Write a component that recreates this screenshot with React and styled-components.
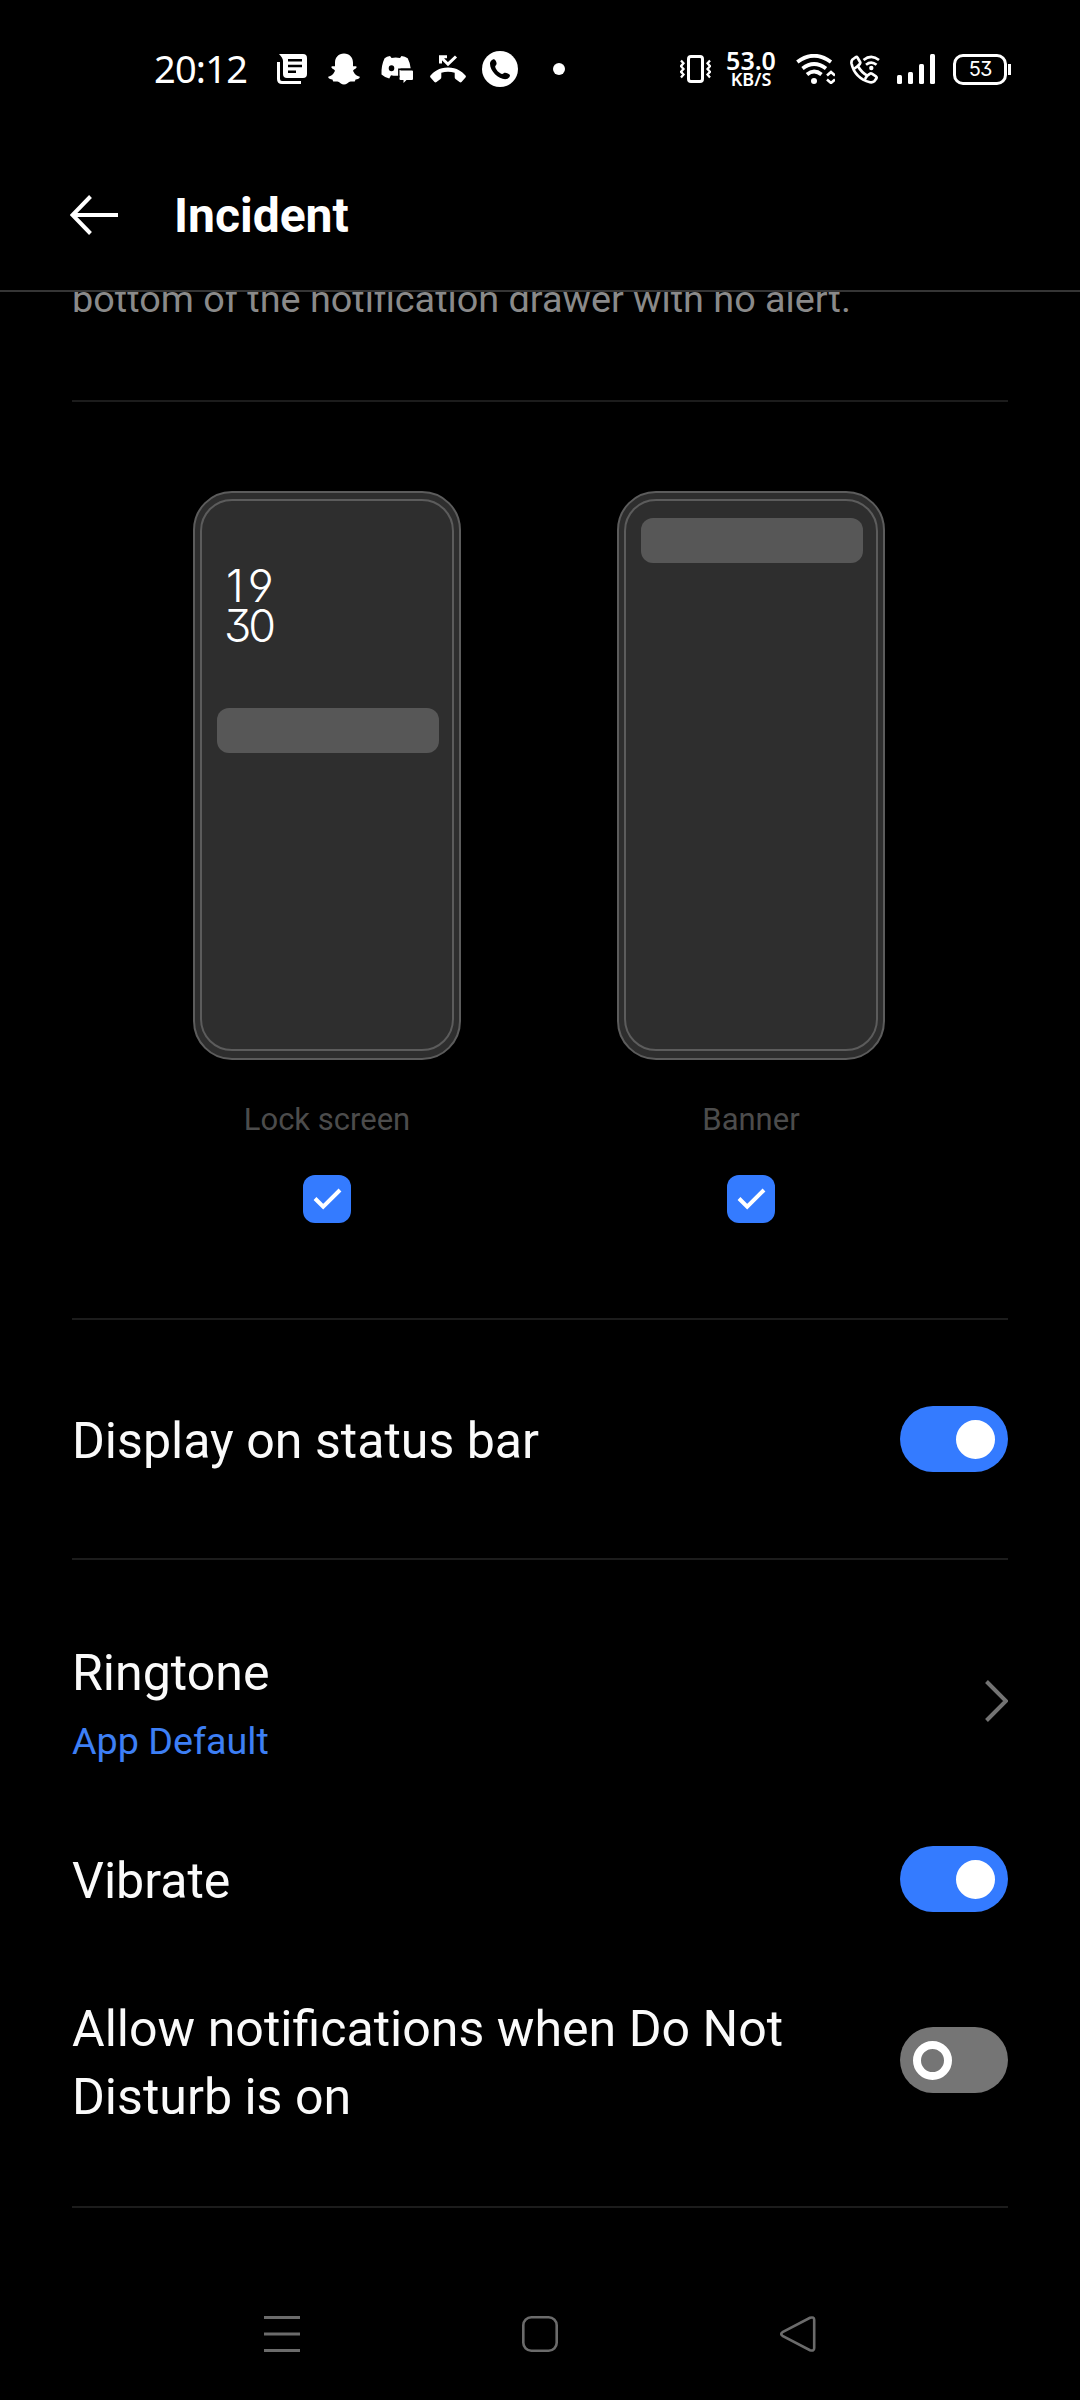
import React, { useState } from "react";
import styled, { createGlobalStyle } from "styled-components";

const GlobalStyle = createGlobalStyle`
  *, *::before, *::after { box-sizing: border-box; }
  html, body { margin: 0; padding: 0; background: #000; }
  body { font-family: Roboto, "Liberation Sans", sans-serif; color: #fff; }
`;

const Screen = styled.main`
  width: 1080px;
  height: 2400px;
  display: flex;
  flex-direction: column;
  background: #000;
  overflow: hidden;
`;

/* Status bar */

const StatusBar = styled.div`
  flex: none;
  height: 138px;
  padding: 0 69px 0 154px;
  display: flex;
  align-items: center;
  justify-content: space-between;
`;

const StatusGroup = styled.div`
  display: flex;
  align-items: center;
`;

const Clock = styled.span`
  width: 106px;
  padding-bottom: 2px;
  font: 400 38px/46px "Noto Sans", sans-serif;
  letter-spacing: -0.8px;
  white-space: nowrap;
`;

const StatusIcon = styled.svg`
  flex: none;
  display: block;
  margin-left: ${(p) => p.$gap || 0}px;
`;

const NetSpeed = styled.div`
  width: 56px;
  margin-left: 12px;
  padding-bottom: 1px;
  display: flex;
  flex-direction: column;
  align-items: center;
  white-space: nowrap;
`;

const SpeedValue = styled.span`
  font: 600 25px/21px "Noto Sans", sans-serif;
`;

const SpeedUnit = styled.span`
  font: 600 18px/17px "Noto Sans", sans-serif;
`;

const Battery = styled.div`
  width: 54px;
  height: 31px;
  margin-left: 18px;
  border: 3px solid #fff;
  border-radius: 10px;
  display: flex;
  align-items: center;
  justify-content: center;
  font: 400 20px/24px Inter, sans-serif;
  font-feature-settings: "cv09", "ss01";
  letter-spacing: -1px;
`;

const BatteryTip = styled.div`
  width: 3px;
  height: 11px;
  margin-left: 1px;
  background: #fff;
`;

/* Header */

const Header = styled.header`
  flex: none;
  height: 154px;
  padding: 2px 70px 0;
  display: flex;
  align-items: center;
  gap: 55px;
  border-bottom: 2px solid #353535;
`;

const IconButton = styled.button`
  padding: 0;
  border: 0;
  background: none;
  display: block;
  cursor: pointer;
  svg { display: block; }
`;

const Title = styled.h1`
  margin: 0;
  padding-top: 2px;
  font-size: 48px;
  line-height: 56px;
  font-weight: 700;
`;

/* Content */

const Content = styled.div`
  flex: none;
  height: 1960px;
  padding: 0 72px;
  overflow: hidden;
`;

const Hint = styled.p`
  margin: -19px 0 75px;
  font-size: 37.8px;
  line-height: 52px;
  color: #8a8a8a;
  white-space: nowrap;
`;

const Divider = styled.hr`
  height: 2px;
  margin: 0;
  border: 0;
  background: #1c1c1c;
`;

const Previews = styled.section`
  height: 916px;
  padding: 89px 2px 0 0;
  display: flex;
  justify-content: center;
  gap: 156px;
`;

const Preview = styled.div`
  width: 268px;
  display: flex;
  flex-direction: column;
  align-items: center;
`;

const Phone = styled.div`
  width: 268px;
  height: 569px;
  padding: 6px 5px 7px;
  border: 2px solid #5c5c5c;
  border-radius: 39px;
  background: #2e2e2e;
`;

const PhoneScreen = styled.div`
  height: 100%;
  border: 2px solid #5c5c5c;
  border-radius: 32px;
  padding: ${(p) => p.$top}px 13px 0 15px;
`;

const PhoneClock = styled.div`
  height: 142px;
  padding-left: 7px;
  font: 300 45px/40px Inter, sans-serif;
  font-feature-settings: "cv09", "ss01";
`;

const ClockLine = styled.div`
  padding-left: ${(p) => p.$indent || 0}px;
  letter-spacing: ${(p) => p.$spacing}px;
`;

const Notice = styled.div`
  height: 45px;
  border-radius: 12px;
  background: #575757;
`;

const PreviewLabel = styled.span`
  margin-top: 41px;
  font-size: 31px;
  line-height: 38px;
  color: #4c4c4c;
`;

const Check = styled.button`
  width: 48px;
  height: 48px;
  margin-top: 36px;
  padding: 0;
  border: 0;
  border-radius: 12px;
  background: ${(p) => (p.$on ? "#347bff" : "#737373")};
  svg { display: block; }
`;

const Row = styled.div`
  height: ${(p) => p.$height}px;
  padding-top: ${(p) => p.$top || 0}px;
  display: flex;
  align-items: center;
  justify-content: space-between;
`;

const RowText = styled.div`
  max-width: 760px;
  padding-top: ${(p) => p.$nudge || 4}px;
  display: flex;
  flex-direction: column;
`;

const RowTitle = styled.span`
  font-size: 50.1px;
  line-height: 68px;
  color: #fafafa;
`;

const RowValue = styled.span`
  font-size: 37.7px;
  line-height: 52px;
  color: #3d7ff5;
  margin-top: 8px;
`;

const Switch = styled.button`
  flex: none;
  width: 108px;
  height: 66px;
  padding: 0 13px;
  border: 0;
  border-radius: 33px;
  display: flex;
  align-items: center;
  justify-content: ${(p) => (p.$on ? "flex-end" : "flex-start")};
  background: ${(p) => (p.$on ? "#347bff" : "#757575")};
`;

const Knob = styled.span`
  width: 39px;
  height: 39px;
  border-radius: 50%;
  border: 8px solid #fff;
  background: ${(p) => (p.$on ? "#fff" : "transparent")};
`;

const NavBar = styled.nav`
  flex: 1;
  padding: 16px 264px 0;
  display: flex;
  align-items: center;
  justify-content: space-between;
`;

function Toggle({ initial, label }) {
  const [on, setOn] = useState(initial);
  return (
    <Switch $on={on} role="switch" aria-checked={on} aria-label={label} onClick={() => setOn(!on)}>
      <Knob $on={on} />
    </Switch>
  );
}

function CheckBox({ label }) {
  const [on, setOn] = useState(true);
  return (
    <Check $on={on} role="checkbox" aria-checked={on} aria-label={label} onClick={() => setOn(!on)}>
      {on && (
        <svg width="48" height="48" fill="none" stroke="#fff" strokeWidth="4">
          <path d="M12 23.5l8.2 8.2L37 15" />
        </svg>
      )}
    </Check>
  );
}

function NotificationIcons() {
  return (
    <>
      <StatusIcon $gap={17} width="30" height="30" viewBox="0 0 30 30">
        <path fill="#fff" d="M2 0h24q4 0 4 4v16q0 4-4 4H10q-4 0-4-4V7Q6 4 2 0z" />
        <path d="M11 6.200h14M11 12h14M11 17.800h8" stroke="#000" strokeWidth="2.400" />
        <path d="M1.500 8v17q0 3.500 3.500 3.500h19" fill="none" stroke="#fff" strokeWidth="3" />
      </StatusIcon>
      <StatusIcon $gap={21} width="32" height="32" viewBox="0 0 32 32">
        <path
          fill="#fff"
          d="M16 0.500c5.600 0 9 4 9 9.200v3.600c1.200.3 2.400-.5 3.300.1 1.100.9-.6 2.400-2.500 3.300-.8.4-.8 1.100-.4 1.900 1.300 2.800 3.400 4.500 6.400 5.100.3 1.700-2.100 2.400-4.200 2.800-.5.5-.3 1.500-.9 1.900-1.400.4-3.100-.4-5 .4-1.900.8-3.100 2.700-5.700 2.700s-3.800-1.900-5.700-2.700c-1.900-.8-3.600 0-5-.4-.6-.4-.4-1.400-.9-1.900C2.300 26.100-.1 25.400.2 23.700c3-.6 5.100-2.300 6.400-5.100.4-.8.4-1.500-.4-1.900-1.900-.9-3.600-2.400-2.500-3.300.9-.6 2.100.2 3.300-.1V9.700c0-5.200 3.400-9.200 9-9.200z"
        />
      </StatusIcon>
      <StatusIcon $gap={21} width="32" height="28" viewBox="0 0 32 28">
        <path
          fill="#fff"
          fillRule="evenodd"
          d="M9 1l1.600 2q4-.9 8.400 0L20.500 1q3.500.3 6.200 2.200 2.600 5 3 10.300H19.500v7q-5 .7-9.500-.2L8.300 23.500Q3.500 22.300.5 19.500.1 10.500 3.600 3.300 5.800 1.500 9 1zM10.500 10.200a2.800 3 0 1 0 .01 6 2.800 3 0 1 0-.01-6z"
        />
        <path fill="#fff" d="M19.500 15.500H31q1 0 1 1V24q0 1-1 1h-5.500L22.500 28v-3h-3q-1 0-1-1v-7.500q0-1 1-1z" />
        <path d="M17.800 22.500v-8.200h13.500" fill="none" stroke="#000" strokeWidth="1.400" />
      </StatusIcon>
      <StatusIcon $gap={17} width="36" height="28" viewBox="0 0 36 28">
        <path d="M10.500 8.500V1.800H17M10.500 1.800L18 9.200 26 1.500" fill="none" stroke="#fff" strokeWidth="3" />
        <path
          fill="#fff"
          d="M18 12.500C27 12.500 32.500 17 35.500 20.500q.8 1 0 2L31.500 27q-1 .8-2 0l-4-3q-.8-.6-.8-1.700v-4.600q-6.700-2-13.400 0v4.600q0 1.100-.8 1.700l-4 3q-1 .8-2 0L.5 22.500q-.8-1 0-2C3.500 17 9 12.500 18 12.500z"
        />
      </StatusIcon>
      <StatusIcon $gap={16} width="36" height="36" viewBox="0 0 36 36">
        <circle cx="18" cy="18" r="18" fill="#fff" />
        <path
          fill="#000"
          d="M12.200 8.300c1.500.7 2.700 3.300 2.300 4.900-.2.900-1.400 1.500-1.300 2.500.6 3 3.700 6.300 6.700 7.200 1.100.3 1.700-1 2.600-1.200 1.700-.3 4.700 1 5.400 2.400.3 1.800-1.800 3.700-3.600 4-7.300.8-16.500-8-16.300-15.600.1-1.900 2.200-4.500 4.200-4.200z"
        />
      </StatusIcon>
      <StatusIcon $gap={35} width="12" height="12">
        <circle cx="6" cy="6" r="6" fill="#fff" />
      </StatusIcon>
    </>
  );
}

function ConnectivityIcons() {
  return (
    <>
      <StatusIcon $gap={17} width="39" height="30" viewBox="0 0 39 30" fill="none" stroke="#fff" strokeWidth="3.800">
        <path d="M1.300 8Q18 -4.500 35 8" />
        <path d="M6.500 14.500Q18 5.500 30 14.500" />
        <path d="M11 20.500Q18 14.500 25.500 20.500" />
        <circle cx="18" cy="27" r="3" fill="#fff" stroke="none" />
        <path d="M31 21.500l4-3.500 4 3.500M31 25.500l4 3.500 4-3.500" strokeWidth="2.600" />
      </StatusIcon>
      <StatusIcon $gap={15} width="30" height="29" viewBox="0 0 30 29" fill="none" stroke="#fff" strokeWidth="2.700">
        <path
          strokeLinejoin="round"
          d="M2.200 4.800L5.600 2.200Q6.800 1.600 7.600 2.800L10.200 7.200Q10.500 8.300 9.800 9L7.800 11Q11.800 17.800 17.300 20.600L19.800 18.800Q20.800 18 21.800 18.600L26 21.400Q27 22.300 26.400 23.400L24.300 26.300Q22.500 27.800 20 27.300C10 24.500 3.500 17.500 1.500 8.500Q1.200 6 2.200 4.800zM7.800 11L4.500 13.500M17.300 20.600L15 24"
        />
        <path d="M13.500 5Q21.300-1.300 29 5M16 9.800Q21.300 5.500 26.500 9.800" />
        <circle cx="21.300" cy="13" r="2.200" fill="#fff" stroke="none" />
      </StatusIcon>
      <StatusIcon $gap={17} width="38" height="30" viewBox="0 0 38 30" fill="#fff">
        <rect x="0" y="21" width="5" height="9" rx="1.500" />
        <rect x="11" y="18" width="5" height="12" rx="1.500" />
        <rect x="22" y="10" width="5" height="20" rx="1.500" />
        <rect x="33" y="0" width="5" height="30" rx="1.500" />
      </StatusIcon>
    </>
  );
}

export default function App() {
  return (
    <>
      <GlobalStyle />
      <Screen>
        <StatusBar>
          <StatusGroup>
            <Clock>20:12</Clock>
            <NotificationIcons />
          </StatusGroup>
          <StatusGroup>
            <StatusIcon width="31" height="28" viewBox="0 0 31 28" fill="none" stroke="#fff">
              <rect x="8.500" y="1.500" width="14" height="25" rx="2.500" strokeWidth="3" />
              <path d="M1 5.500l2.500 2.800L1 11.200l2.500 2.800L1 16.800l2.500 2.800L1 22.500M30 5.500l-2.500 2.800 2.500 2.900-2.500 2.800 2.500 2.800-2.500 2.800 2.500 2.900" strokeWidth="2.300" />
            </StatusIcon>
            <NetSpeed>
              <SpeedValue>53.0</SpeedValue>
              <SpeedUnit>KB/S</SpeedUnit>
            </NetSpeed>
            <ConnectivityIcons />
            <Battery>53</Battery>
            <BatteryTip />
          </StatusGroup>
        </StatusBar>

        <Header>
          <IconButton aria-label="Back">
            <svg width="49" height="40" fill="none" stroke="#fff" strokeWidth="4">
              <path d="M20.500 1.500L2.500 20l18 18.500M2.500 20H48" />
            </svg>
          </IconButton>
          <Title>Incident</Title>
        </Header>

        <Content>
          <Hint>bottom of the notification drawer with no alert.</Hint>
          <Divider />
          <Previews>
            <Preview>
              <Phone>
                <PhoneScreen $top={65}>
                  <PhoneClock>
                    <ClockLine $indent={2} $spacing={4}>19</ClockLine>
                    <ClockLine $spacing={-3}>30</ClockLine>
                  </PhoneClock>
                  <Notice />
                </PhoneScreen>
              </Phone>
              <PreviewLabel>Lock screen</PreviewLabel>
              <CheckBox label="Lock screen" />
            </Preview>
            <Preview>
              <Phone>
                <PhoneScreen $top={17}>
                  <Notice />
                </PhoneScreen>
              </Phone>
              <PreviewLabel>Banner</PreviewLabel>
              <CheckBox label="Banner" />
            </Preview>
          </Previews>
          <Divider />
          <Row $height={238}>
            <RowText>
              <RowTitle>Display on status bar</RowTitle>
            </RowText>
            <Toggle initial label="Display on status bar" />
          </Row>
          <Divider />
          <Row $height={231} $top={51}>
            <RowText $nudge={4}>
              <RowTitle>Ringtone</RowTitle>
              <RowValue>App Default</RowValue>
            </RowText>
            <svg width="23" height="42" fill="none" stroke="#737373" strokeWidth="4">
              <path d="M1.500 1.500L21 21L1.500 40.500" />
            </svg>
          </Row>
          <Row $height={176}>
            <RowText>
              <RowTitle>Vibrate</RowTitle>
            </RowText>
            <Toggle initial label="Vibrate" />
          </Row>
          <Row $height={186}>
            <RowText $nudge={5}>
              <RowTitle>Allow notifications when Do Not Disturb is on</RowTitle>
            </RowText>
            <Toggle initial={false} label="Allow notifications when Do Not Disturb is on" />
          </Row>
          <Row $height={53} />
          <Divider />
        </Content>

        <NavBar>
          <IconButton aria-label="Recent apps">
            <svg width="36" height="36" stroke="#6b6b6b" strokeWidth="3">
              <path d="M0 1.500h36M0 18h36M0 34.500h36" />
            </svg>
          </IconButton>
          <IconButton aria-label="Home">
            <svg width="36" height="36" fill="none" stroke="#6b6b6b" strokeWidth="2.600">
              <rect x="1.300" y="1.300" width="33.400" height="33.400" rx="8" />
            </svg>
          </IconButton>
          <IconButton aria-label="Back">
            <svg width="36" height="36" fill="none" stroke="#6b6b6b" strokeWidth="2.600">
              <path d="M2.500 16.200L30 1.800Q34.200.5 34.200 4V32Q34.200 35.500 30 34.200L2.500 19.800Q0 18 2.500 16.200z" />
            </svg>
          </IconButton>
        </NavBar>
      </Screen>
    </>
  );
}
